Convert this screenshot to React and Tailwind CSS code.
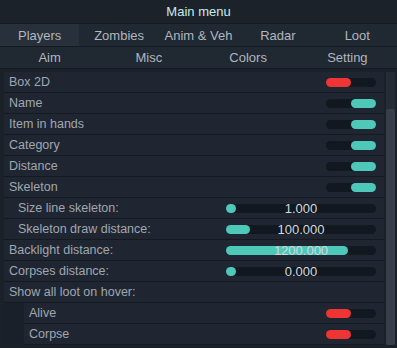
import React from "react";

const font = { fontFamily: '"Liberation Sans", Arial, sans-serif' };

function Toggle({ on }) {
  return (
    <div className="relative w-[50px] h-[9px] rounded-full bg-[#121820]">
      <div
        className={`absolute top-0 h-[9px] w-[25px] rounded-full ${
          on ? "right-0 bg-[#4ec8b9]" : "left-0 bg-[#ef3434]"
        }`}
      ></div>
    </div>
  );
}

function Slider({ fill, value }) {
  return (
    <div className="relative w-[150px] h-[9px] rounded-full bg-[#121820]">
      <div
        className="absolute left-0 top-0 h-[9px] rounded-full bg-[#4ec8b9]"
        style={{ width: fill }}
      ></div>
      <div className="absolute inset-0 flex items-center justify-center text-[13px] text-[#d3d8dd] leading-none">
        {value}
      </div>
    </div>
  );
}

function Row({ label, indent = 5, children }) {
  return (
    <div className="h-[21px] flex items-center justify-between border-b border-[#151a21] bg-[#1f2631] pr-[8px]">
      <span className="text-[12.5px] text-[#a0a7b0]" style={{ paddingLeft: indent }}>
        {label}
      </span>
      {children}
    </div>
  );
}

function SubRow({ label, children }) {
  return (
    <div className="flex">
      <div className="w-[20px] h-[21px] bg-[#1a2029]"></div>
      <div className="flex-1 h-[21px] flex items-center justify-between border-b border-[#151a21] bg-[#1f2631] pr-[8px]">
        <span className="pl-[5px] text-[12.5px] text-[#a0a7b0]">{label}</span>
        {children}
      </div>
    </div>
  );
}

export default function App() {
  const topTabs = ["Players", "Zombies", "Anim & Veh", "Radar", "Loot"];
  const subTabs = ["Aim", "Misc", "Colors", "Setting"];

  return (
    <div className="w-[397px] h-[348px] overflow-hidden bg-[#1b2129] flex flex-col" style={font}>
      <div className="h-[24px] shrink-0 flex items-center justify-center pt-[1px] bg-[#1c222a] border-b border-[#161b22] text-[13px] text-[#c6ecec]">
        Main menu
      </div>

      <div className="h-[23px] shrink-0 grid grid-cols-5 bg-[#202832] border-b border-[#151a20]">
        {topTabs.map((t, i) => (
          <div
            key={t}
            className={`flex items-center justify-center pt-[1px] text-[13px] text-[#b0b7bf] ${
              i === 0 ? "bg-[#27303b]" : ""
            }`}
          >
            {t}
          </div>
        ))}
      </div>

      <div className="h-[22px] shrink-0 grid grid-cols-4 bg-[#202832] border-b border-[#151a20]">
        {subTabs.map((t) => (
          <div key={t} className="flex items-center justify-center text-[13px] text-[#b0b7bf]">
            {t}
          </div>
        ))}
      </div>

      <div className="flex-1 flex pt-[3px]">
        <div className="flex-1 pl-[4px] flex flex-col">
          <Row label="Box 2D">
            <Toggle on={false} />
          </Row>
          <Row label="Name">
            <Toggle on />
          </Row>
          <Row label="Item in hands">
            <Toggle on />
          </Row>
          <Row label="Category">
            <Toggle on />
          </Row>
          <Row label="Distance">
            <Toggle on />
          </Row>
          <Row label="Skeleton">
            <Toggle on />
          </Row>
          <Row label="Size line skeleton:" indent={14}>
            <Slider fill={10} value="1.000" />
          </Row>
          <Row label="Skeleton draw distance:" indent={14}>
            <Slider fill={24} value="100.000" />
          </Row>
          <Row label="Backlight distance:">
            <Slider fill={122} value="1200.000" />
          </Row>
          <Row label="Corpses distance:">
            <Slider fill={10} value="0.000" />
          </Row>
          <Row label="Show all loot on hover:"></Row>
          <SubRow label="Alive">
            <Toggle on={false} />
          </SubRow>
          <SubRow label="Corpse">
            <Toggle on={false} />
          </SubRow>
        </div>

        <div className="w-[9px] ml-[2px] mr-[2px] mb-[3px] flex flex-col bg-[#262c36]">
          <div className="h-[37px]"></div>
          <div className="flex-1 bg-[#383f4b] rounded-[2px]"></div>
        </div>
      </div>
    </div>
  );
}
